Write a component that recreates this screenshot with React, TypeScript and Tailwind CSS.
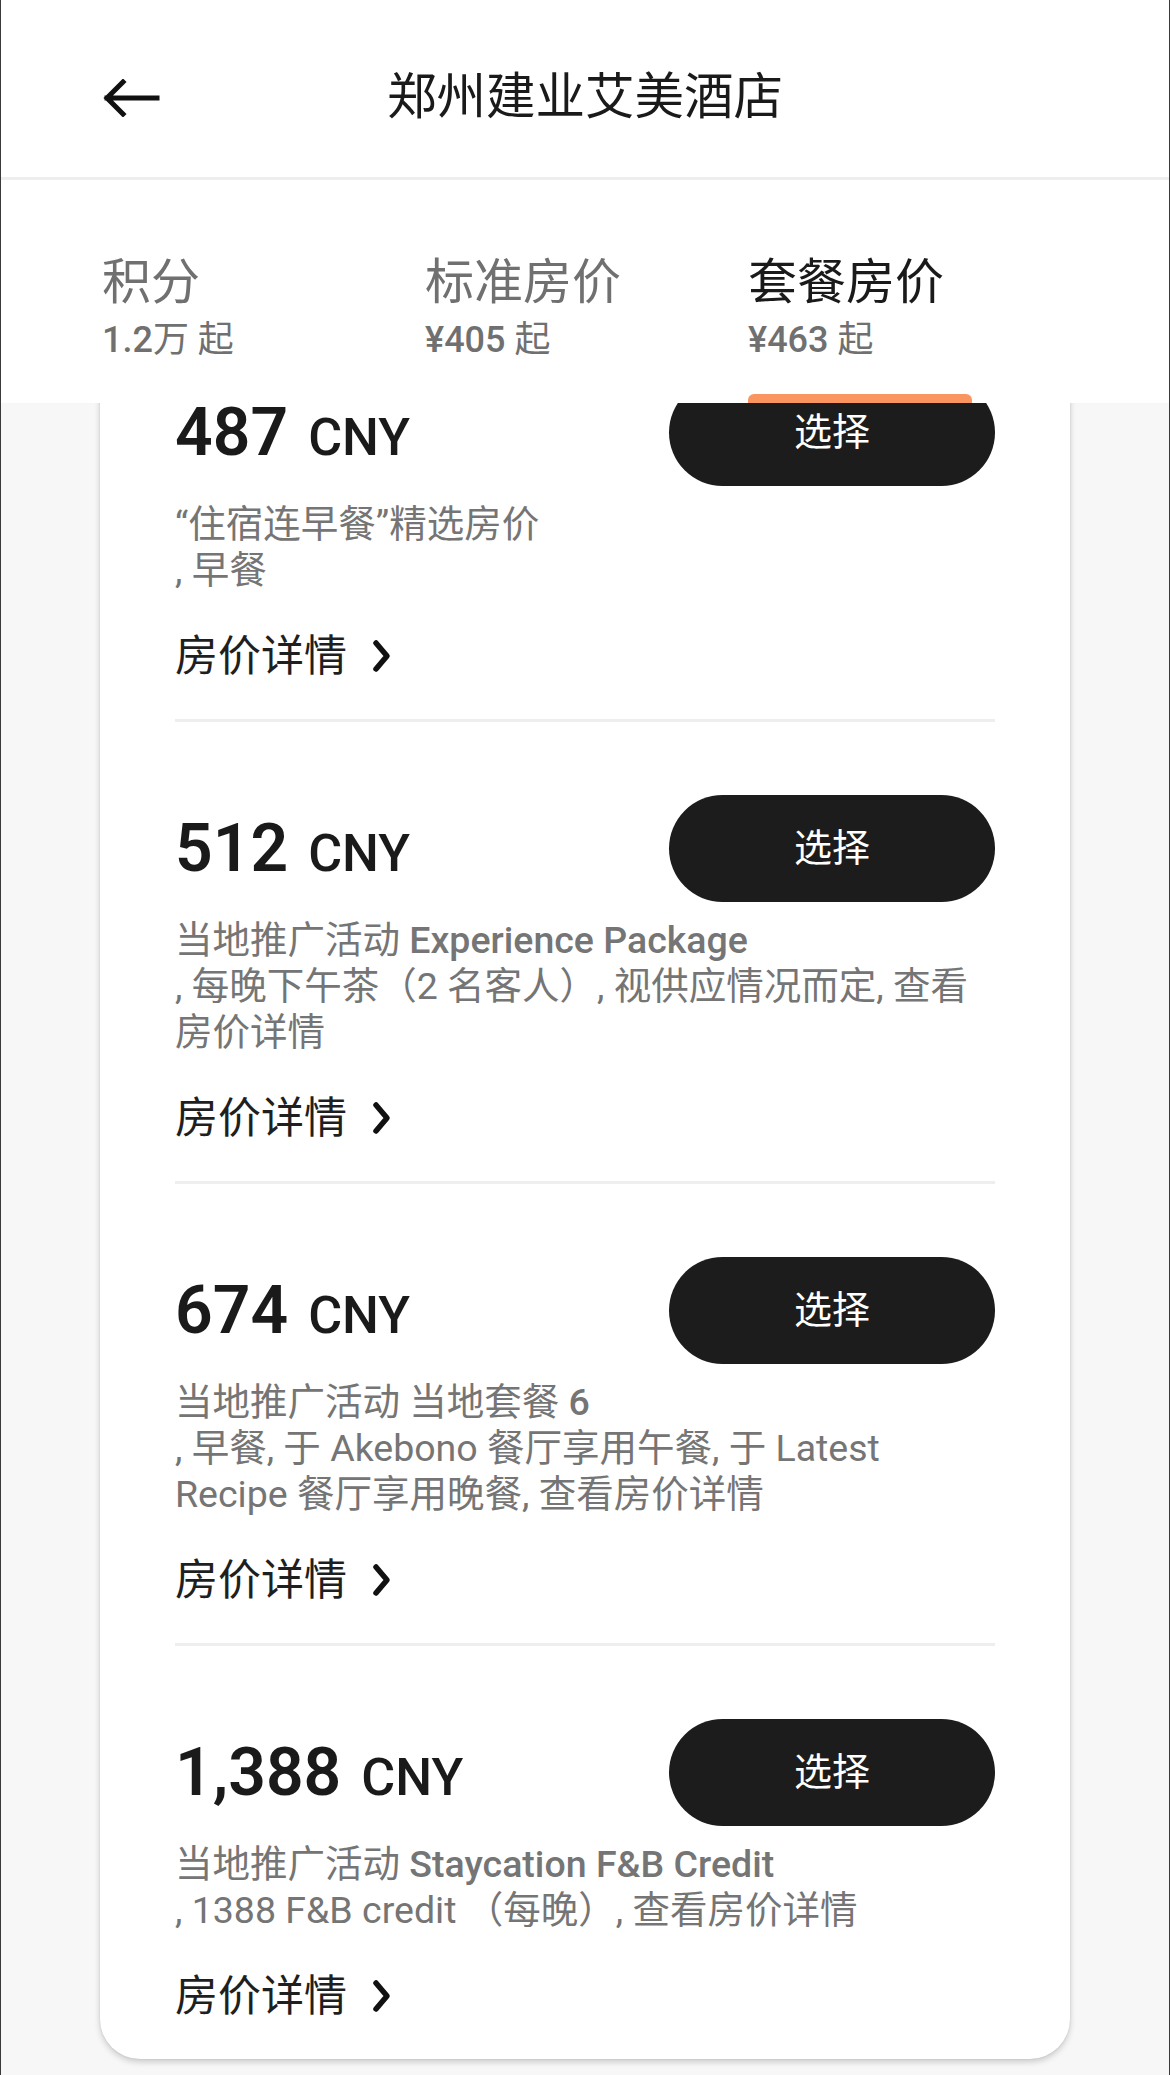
type Tab = {
  label: string;
  from: string;
  active?: boolean;
};

type Rate = {
  price: string;
  title: string;
  details: string;
};

const tabs: Tab[] = [
  { label: "积分", from: "1.2万 起" },
  { label: "标准房价", from: "¥405 起" },
  { label: "套餐房价", from: "¥463 起", active: true },
];

const rates: Rate[] = [
  { price: "487", title: "“住宿连早餐”精选房价", details: ", 早餐" },
  {
    price: "512",
    title: "当地推广活动 Experience Package",
    details: ", 每晚下午茶（2 名客人）, 视供应情况而定, 查看房价详情",
  },
  {
    price: "674",
    title: "当地推广活动 当地套餐 6",
    details: ", 早餐, 于 Akebono 餐厅享用午餐, 于 Latest Recipe 餐厅享用晚餐, 查看房价详情",
  },
  {
    price: "1,388",
    title: "当地推广活动 Staycation F&B Credit",
    details: ", 1388 F&B credit （每晚）, 查看房价详情",
  },
];

// latin bits get the heavier weight, CJK stays regular
function Latin({ text }: { text: string }) {
  const parts = text.split(/([A-Za-z0-9¥&.,]+(?: [A-Za-z0-9¥&.,]+)*)/);
  return (
    <>
      {parts.map((part, i) =>
        i % 2 === 1 ? (
          <span key={i} className="font-medium">
            {part}
          </span>
        ) : (
          part
        ),
      )}
    </>
  );
}

function BackArrow() {
  return (
    <svg width="58" height="38" viewBox="0 0 58 38" fill="none">
      <path
        d="M55 19H5M21 3L5 19L21 35"
        stroke="#111"
        strokeWidth="5"
        strokeLinecap="square"
        strokeLinejoin="miter"
      />
    </svg>
  );
}

function Chevron() {
  return (
    <svg width="22" height="34" viewBox="0 0 22 34" fill="none">
      <path
        d="M5 4L16 17L5 30"
        stroke="#111"
        strokeWidth="5.5"
        strokeLinecap="round"
        strokeLinejoin="round"
      />
    </svg>
  );
}

function RateRow({ rate }: { rate: Rate }) {
  return (
    <div className="border-b-[3px] border-[#eeeeee] pt-[73px] pb-[35px] last:border-b-0">
      <div className="flex items-center justify-between">
        <p className="flex items-baseline text-[#1a1a1a]">
          <span className="text-[66px] font-semibold leading-none">{rate.price}</span>
          <span className="ml-[20px] text-[52px] font-medium leading-none">CNY</span>
        </p>
        <button className="h-[107px] w-[326px] rounded-full bg-[#1c1c1c] text-[38px] text-white">
          选择
        </button>
      </div>

      <div className="mt-[15px] text-[37.5px] leading-[46px] text-[#757575]">
        <p>
          <Latin text={rate.title} />
        </p>
        <p>{rate.details}</p>
      </div>

      <a className="mt-[35px] flex h-[56px] items-center gap-[24px] text-[43px] text-[#1f1f1f]">
        房价详情
        <Chevron />
      </a>
    </div>
  );
}

export default function App() {
  return (
    <div className="flex h-[2075px] flex-col overflow-hidden border-x border-[#3a3a3a] bg-[#f7f7f7] font-[Roboto,'Noto_Sans_CJK_SC',sans-serif]">
      <header className="grid h-[180px] shrink-0 grid-cols-[1fr_auto_1fr] items-center border-b-[3px] border-[#eeeeee] bg-white pt-[18px]">
        <div className="pl-[101px]">
          <BackArrow />
        </div>
        <h1 className="text-[49.5px] text-[#1a1a1a]">郑州建业艾美酒店</h1>
        <div />
      </header>

      <nav className="flex h-[223px] shrink-0 gap-[99px] bg-white pl-[101px]">
        {tabs.map((tab) => (
          <div key={tab.label} className="flex w-[224px] flex-col pt-[75px]">
            <span
              className={
                tab.active
                  ? "text-[49px] leading-[56px] text-[#1a1a1a]"
                  : "text-[49px] leading-[56px] text-[#707070]"
              }
            >
              {tab.label}
            </span>
            <span className="mt-[8px] text-[36px] leading-[42px] text-[#707070]">
              <Latin text={tab.from} />
            </span>
            {tab.active && (
              <span className="mt-auto h-[9px] rounded-t-[6px] bg-[#fb9560]" />
            )}
          </div>
        ))}
      </nav>

      <main className="flex-1 overflow-hidden">
        <div className="mx-[99px] -mt-[97px] rounded-b-[40px] bg-white px-[75px] shadow-[0_3px_6px_rgba(0,0,0,0.18),0_0_2px_rgba(0,0,0,0.12)]">
          {rates.map((rate) => (
            <RateRow key={rate.price} rate={rate} />
          ))}
        </div>
      </main>
    </div>
  );
}
